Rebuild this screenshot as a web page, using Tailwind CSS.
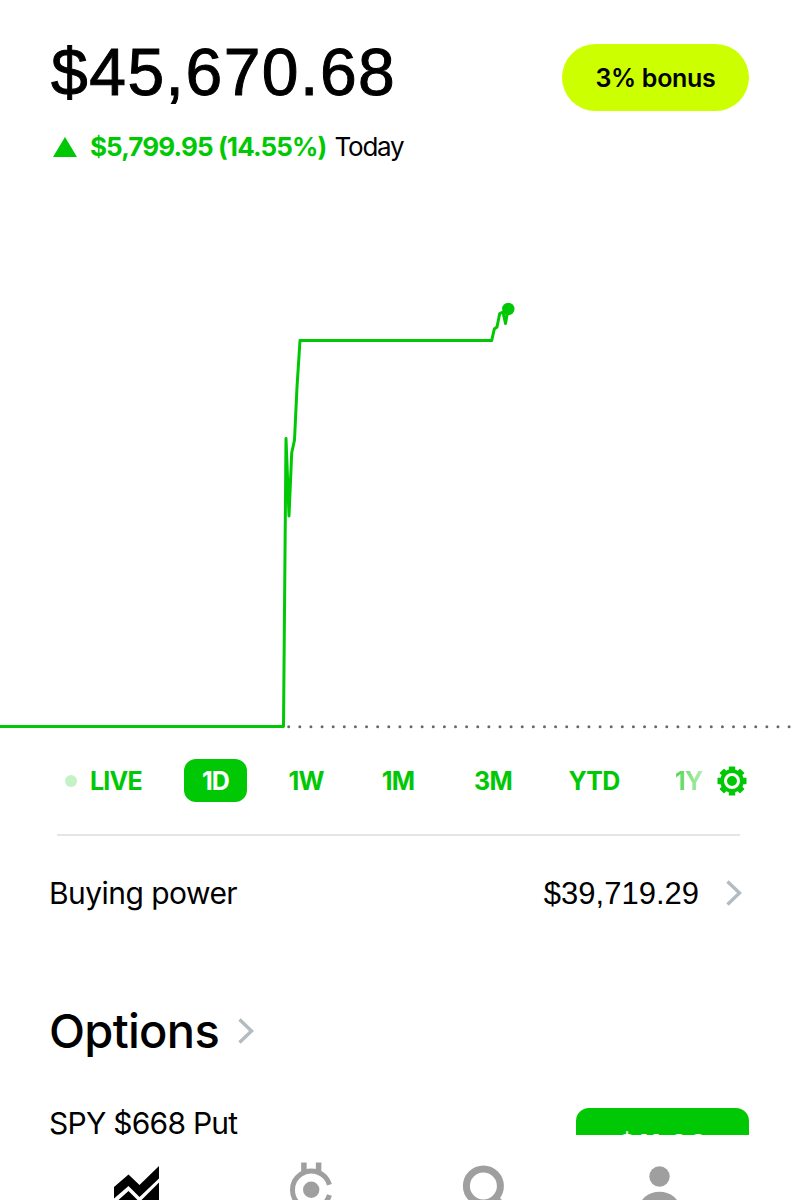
<!DOCTYPE html>
<html lang="en">
<head>
    <meta charset="UTF-8">
    <meta name="viewport" content="width=device-width, initial-scale=1.0">
    <title>Portfolio</title>
    <script src="https://cdn.jsdelivr.net/npm/@tailwindcss/browser@4"></script>
</head>
<body class="bg-white text-black font-['Inter','Liberation_Sans',sans-serif]">
    <div class="w-[797px] h-[1200px] overflow-hidden flex flex-col">

        <!-- Portfolio value -->
        <header class="h-[200px] shrink-0 pl-[50px] pr-[48px] pt-[37px] flex justify-between items-start">
            <div>
                <h1 class="pl-px text-[66px] leading-[70px] tracking-[1.5px] whitespace-nowrap font-['Liberation_Sans',sans-serif] [-webkit-text-stroke:1px_black]">$45,670.68</h1>
                <div class="mt-[24px] pl-[3px] flex items-center text-[26px] leading-[32px] whitespace-nowrap">
                    <svg class="w-6 h-5 mr-[13px]" viewBox="0 0 24 20"><path d="M12 0L24 20H0z" fill="#00c805"/></svg>
                    <span class="text-[#00c805] font-bold tracking-[-0.9px]">$5,799.95 (14.55%)</span>
                    <span class="ml-[8px] tracking-[-1.2px]">Today</span>
                </div>
            </div>
            <button class="mt-[7px] pt-[2px] w-[187px] h-[67px] rounded-full bg-[#ccff00] text-[25px] font-semibold tracking-[-0.3px]">3% bonus</button>
        </header>

        <!-- Day chart -->
        <svg class="w-[797px] h-[540px] shrink-0" viewBox="0 200 797 540" fill="none">
            <path d="M288.700 726.700H797" stroke="#666a6e" stroke-width="3" stroke-linecap="round" stroke-dasharray="0 11.12"/>
            <path d="M0 726.500H283.500L286 438.500L289 516L291.700 453L294.500 440L297 387L300 340.500H491.700L494.300 329L497 327L499.700 313.500L503 312L505.500 323.500L508 309" stroke="#00c805" stroke-width="3" stroke-linecap="round" stroke-linejoin="round"/>
            <circle cx="508.300" cy="309" r="6.200" fill="#00c805"/>
        </svg>

        <!-- Time ranges -->
        <nav class="h-[82px] shrink-0 pl-[65px] grid grid-cols-[119px_63px_13px_92px_92px_98px_104px_71px_31px] items-center text-[25px] font-bold text-[#00c805] text-center tracking-[-0.8px]">
            <div class="flex items-center gap-[13px]">
                <span class="size-3 rounded-full bg-[#c5f1c6]"></span>
                <span class="pt-[2px]">LIVE</span>
            </div>
            <span class="h-[43px] -mt-px leading-[45px] rounded-[12px] bg-[#00c805] text-white">1D</span>
            <span></span>
            <span class="pt-[2px]">1W</span>
            <span class="pt-[2px]">1M</span>
            <span class="pt-[2px]">3M</span>
            <span class="pt-[2px]">YTD</span>
            <span class="pt-[2px] justify-self-start ml-[28px] pl-px pr-[2px] bg-linear-to-r from-[#40d544] to-[#b8efba] bg-clip-text text-transparent">1Y</span>
            <svg class="w-[30px] h-[30px]" viewBox="-15 -15 30 30">
                <g fill="#00c805">
                    <rect x="-3.200" y="-14.500" width="6.400" height="29" rx=".6"/>
                    <rect x="-3.200" y="-14.500" width="6.400" height="29" rx=".6" transform="rotate(45)"/>
                    <rect x="-3.200" y="-14.500" width="6.400" height="29" rx=".6" transform="rotate(90)"/>
                    <rect x="-3.200" y="-14.500" width="6.400" height="29" rx=".6" transform="rotate(135)"/>
                    <circle r="11.800"/>
                </g>
                <circle r="6.500" fill="#00c805" stroke="#fff" stroke-width="3"/>
            </svg>
        </nav>

        <!-- Buying power -->
        <section class="mt-[12px] h-[118px] shrink-0 text-[30px]">
            <div class="ml-[57px] w-[683px] h-[2px] bg-[#e3e5e6]"></div>
            <div class="h-[114px] pl-[49px] pr-[55px] flex items-center">
                <span class="tracking-[-0.55px]">Buying power</span>
                <span class="ml-auto pt-[2px] text-[31px] font-['Liberation_Sans',sans-serif]">$39,719.29</span>
                <svg class="ml-[27px] w-4 h-[26px]" viewBox="0 0 16 26" fill="none"><path d="M1.500 1.500L13.500 13L1.500 24.500" stroke="#b4bbc1" stroke-width="3.400"/></svg>
            </div>
        </section>

        <!-- Options -->
        <section class="h-[183px] shrink-0 overflow-hidden pl-[49px] pr-[48px] pt-[48px]">
            <h2 class="h-[62px] flex items-center text-[47px] font-medium tracking-[-0.7px]">
                Options
                <svg class="ml-[19px] w-4 h-[26px]" viewBox="0 0 16 26" fill="none"><path d="M1.500 1.500L13.500 13L1.500 24.500" stroke="#b4bbc1" stroke-width="3.400"/></svg>
            </h2>
            <div class="mt-[46px] flex justify-between items-start">
                <span class="text-[30px] leading-[30px] tracking-[-0.75px]">SPY $668 Put</span>
                <span class="w-[173px] h-[72px] rounded-[13px] bg-[#00c805] text-white text-[29px] leading-[73px] text-center font-semibold">$11.00</span>
            </div>
        </section>

        <!-- Bottom tabs, cut off by the viewport -->
        <footer class="h-[65px] shrink-0 bg-white overflow-hidden">
            <svg class="w-[797px] h-[65px]" viewBox="0 1135 797 65">
                <path d="M114 1187L128.500 1174.500L139.500 1185L159 1166V1178.500L139.500 1197L128.500 1186L114 1198.500z"/>
                <path d="M114 1204L128.500 1191L139.500 1202L159 1182.500V1210H114z"/>
                <g fill="none" stroke="#9f9f9f">
                    <path d="M303.900 1162.500V1173M318.600 1162.500V1173" stroke-width="5.500"/>
                    <path d="M329.400 1184.800A18.800 18.800 0 1 0 329.400 1195" stroke-width="5"/>
                    <circle cx="483.400" cy="1186" r="17" stroke-width="7"/>
                    <path d="M495 1198L505 1208" stroke-width="7"/>
                </g>
                <circle cx="311.200" cy="1189.800" r="8.200" fill="#9f9f9f"/>
                <circle cx="659.500" cy="1176.500" r="10.200" fill="#9f9f9f"/>
                <ellipse cx="659.500" cy="1208" rx="20" ry="16.300" fill="#9f9f9f"/>
            </svg>
        </footer>
    </div>
</body>
</html>
